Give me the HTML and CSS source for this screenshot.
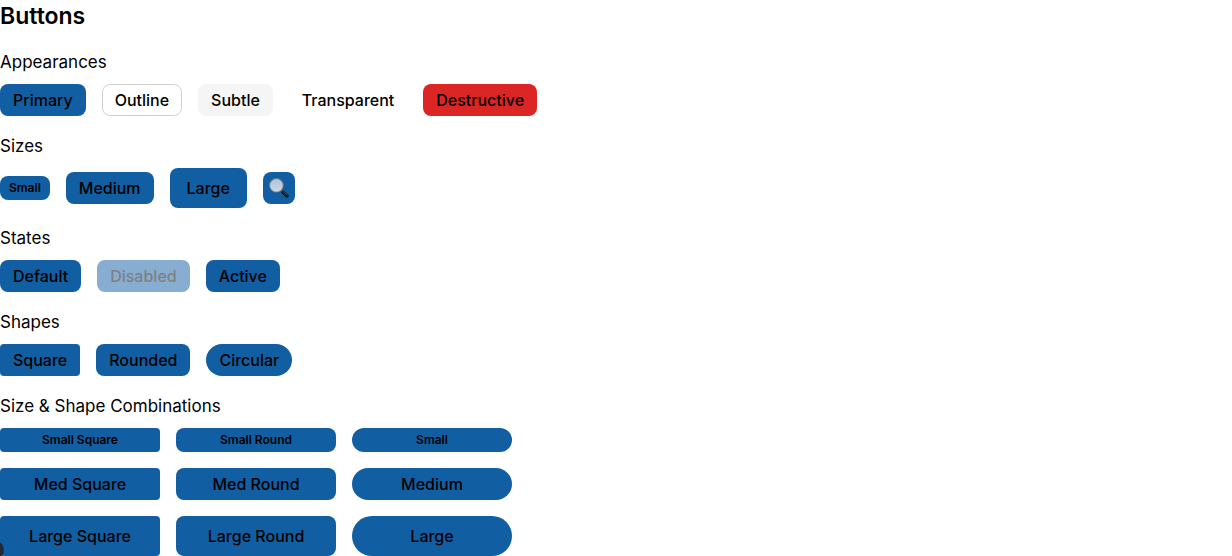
FILE: index.html
```html
<!DOCTYPE html>
<html lang="en">
<head>
<meta charset="utf-8">
<title>Buttons</title>
<meta name="viewport" content="width=device-width, initial-scale=1">
<link rel="stylesheet" href="styles.css">
</head>
<body>
<main class="page">
  <h1 class="title">Buttons</h1>

  <section class="section">
    <h2 class="heading">Appearances</h2>
    <div class="row">
      <button type="button" class="btn">Primary</button>
      <button type="button" class="btn btn-outline">Outline</button>
      <button type="button" class="btn btn-subtle">Subtle</button>
      <button type="button" class="btn btn-transparent">Transparent</button>
      <button type="button" class="btn btn-destructive">Destructive</button>
    </div>
  </section>

  <section class="section">
    <h2 class="heading">Sizes</h2>
    <div class="row">
      <button type="button" class="btn btn-small">Small</button>
      <button type="button" class="btn">Medium</button>
      <button type="button" class="btn btn-large">Large</button>
      <button type="button" class="btn btn-icon" aria-label="Search">
        <svg class="icon" viewBox="0 0 20 20" aria-hidden="true">
          <defs>
            <linearGradient id="glass" x1="0" y1="0" x2="0" y2="1">
              <stop offset="0" stop-color="#a9c4dc"/>
              <stop offset="1" stop-color="#c9d9e8"/>
            </linearGradient>
          </defs>
          <path d="M11.500 11.500l3 3" stroke="#8d8f91" stroke-width="2" fill="none"/>
          <path d="M14 14l4 4" stroke="#17191b" stroke-width="3.400" stroke-linecap="round" fill="none"/>
          <path d="M14.600 13.600l3.400 3.400" stroke="#66696c" stroke-width="0.700" stroke-linecap="round" fill="none"/>
          <circle cx="7.400" cy="7.400" r="6.600" fill="url(#glass)" stroke="#85898d" stroke-width="1.200"/>
          <circle cx="7.400" cy="7.400" r="5.800" fill="none" stroke="#d5dde4" stroke-width="0.500"/>
        </svg>
      </button>
    </div>
  </section>

  <section class="section">
    <h2 class="heading">States</h2>
    <div class="row">
      <button type="button" class="btn">Default</button>
      <button type="button" class="btn" disabled>Disabled</button>
      <button type="button" class="btn">Active</button>
    </div>
  </section>

  <section class="section">
    <h2 class="heading">Shapes</h2>
    <div class="row">
      <button type="button" class="btn btn-square">Square</button>
      <button type="button" class="btn">Rounded</button>
      <button type="button" class="btn btn-circular">Circular</button>
    </div>
  </section>

  <section class="section">
    <h2 class="heading">Size &amp; Shape Combinations</h2>
    <div class="grid">
      <button type="button" class="btn btn-small btn-square">Small Square</button>
      <button type="button" class="btn btn-small">Small Round</button>
      <button type="button" class="btn btn-small btn-circular">Small</button>
      <button type="button" class="btn btn-square">Med Square</button>
      <button type="button" class="btn">Med Round</button>
      <button type="button" class="btn btn-circular">Medium</button>
      <button type="button" class="btn btn-large btn-square">Large Square</button>
      <button type="button" class="btn btn-large">Large Round</button>
      <button type="button" class="btn btn-large btn-circular">Large</button>
    </div>
  </section>
</main>
<span class="edge-handle"></span>
</body>
</html>
```
FILE: styles.css
```css
*,
*::before,
*::after {
  box-sizing: border-box;
}

body {
  margin: 0;
  background: #fff;
  color: #000;
  font-family: Inter, Roboto, sans-serif;
}

.page {
  display: flex;
  flex-direction: column;
  gap: 16px;
}

.title {
  margin: 0;
  font-size: 23px;
  font-weight: 600;
  line-height: 32px;
}

.section {
  display: flex;
  flex-direction: column;
  gap: 8px;
}

.heading {
  margin: 0;
  font-size: 17px;
  font-weight: 400;
  line-height: 28px;
}

.row {
  display: flex;
  flex-wrap: wrap;
  align-items: center;
  gap: 16px;
}

.grid {
  display: grid;
  grid-template-columns: repeat(3, 160px);
  gap: 16px;
}

.btn {
  display: inline-flex;
  align-items: center;
  justify-content: center;
  height: 32px;
  padding: 0 12px;
  border: 1px solid transparent;
  border-radius: 8px;
  background: #115ea3 border-box;
  color: #000;
  font-family: inherit;
  font-size: 16px;
  font-weight: 500;
  line-height: 20px;
  white-space: nowrap;
}

.btn:disabled {
  opacity: 0.5;
}

.btn-outline {
  border-color: #d1d1d1;
  background: #fff;
}

.btn-subtle {
  background: #f5f5f5;
}

.btn-transparent {
  background: transparent;
}

.btn-destructive {
  background: #dc2626;
}

.btn-small {
  height: 24px;
  padding: 0 8px;
  font-size: 12px;
  font-weight: 600;
  line-height: 16px;
}

.btn-large {
  height: 40px;
  padding: 0 16px;
}

.btn-icon {
  width: 32px;
  padding: 0;
}

.btn-square {
  border-radius: 4px;
}

.btn-circular {
  border-radius: 999px;
}

.icon {
  width: 20px;
  height: 20px;
}

.edge-handle {
  position: fixed;
  bottom: -4px;
  left: -16px;
  width: 20px;
  height: 20px;
  border-radius: 50%;
  background: #212936;
}
```
